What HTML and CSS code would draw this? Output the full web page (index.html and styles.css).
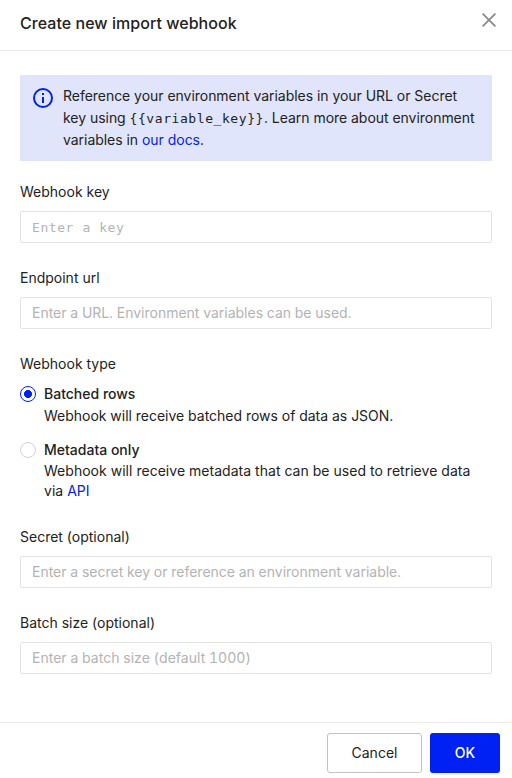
FILE: index.html
```html
<!DOCTYPE html>
<html lang="en">
<head>
<meta charset="utf-8">
<title>Create new import webhook</title>
<link rel="stylesheet" href="styles.css">
</head>
<body>
<div class="modal">
  <header class="header">
    <h1 class="title">Create new import webhook</h1>
    <button class="close" aria-label="Close"><svg width="16" height="16" viewBox="0 0 16 16"><path d="M1.6 1.6l12.8 12.8M14.4 1.6l-12.8 12.8" stroke="#8a8a8a" stroke-width="1.8" fill="none"/></svg></button>
  </header>
  <main class="body">
    <div class="alert">
      <svg class="info" width="20" height="20" viewBox="0 0 20 20" fill="none" stroke="#0021f3" stroke-width="2"><circle cx="10" cy="10" r="9"/><path d="M10 9v6M10 5v2"/></svg>
      <p class="alert-text"><span class="tight">Reference your environment variables in your URL or Secret</span><br><span class="tight">key using <code>{{variable_key}}</code>. Learn more about environment</span><br><span class="tight">variables in <a>our docs</a>.</span></p>
    </div>
    <div class="field"><label>Webhook key</label><input class="mono" placeholder="Enter a key"></div>
    <div class="field"><label>Endpoint url</label><input placeholder="Enter a URL. Environment variables can be used."></div>
    <div class="types">
      <div class="types-label">Webhook type</div>
      <div class="option"><span class="radio checked"></span><div><div class="name">Batched rows</div><div class="desc first">Webhook will receive batched rows of data as JSON.</div></div></div>
      <div class="option"><span class="radio"></span><div><div class="name">Metadata only</div><div class="desc">Webhook will receive metadata that can be used to retrieve data<br>via <a>API</a></div></div></div>
    </div>
    <div class="field"><label>Secret (optional)</label><input placeholder="Enter a secret key or reference an environment variable."></div>
    <div class="field"><label>Batch size (optional)</label><input class="batch" placeholder="Enter a batch size (default 1000)"></div>
  </main>
  <footer class="footer"><button class="btn cancel">Cancel</button><button class="btn ok">OK</button></footer>
</div>
</body>
</html>
```
FILE: styles.css
```css
* { box-sizing: border-box; }
body { margin: 0; background: #fff; color: #222; font: 14px/22px Inter, sans-serif; }
.modal { display: flex; flex-direction: column; height: 778px; overflow: hidden; }
.header { display: flex; justify-content: space-between; flex: none; height: 51px; padding: 12px 15px 0 20px; border-bottom: 1px solid #ececec; }
.title { margin: 0; font-size: 16px; line-height: 22px; font-weight: 500; letter-spacing: .04px; }
.close { display: flex; width: 16px; height: 16px; padding: 0; border: 0; background: none; }
.body { flex: 1; padding: 24px 20px 0; }
.alert { display: flex; gap: 10px; height: 86px; padding: 10px 13px; margin-bottom: 20px; background: #e1e5fc; }
.info { flex: none; margin-top: 3px; }
.alert-text { margin: 0; white-space: nowrap; }
.tight { letter-spacing: -.035px; }
code { font: 13px/20px "DejaVu Sans Mono", monospace; letter-spacing: .57px; }
a { color: #0021f3; }
.field { display: flex; flex-direction: column; gap: 8px; height: 86px; }
label { height: 22px; }
input { width: 100%; height: 32px; padding: 0 11px 2px; border: 1px solid #e3e3e3; border-radius: 2px; font: inherit; font-variant-numeric: tabular-nums; letter-spacing: -.005px; }
input::placeholder { color: #b3b3b3; }
input.mono { padding-bottom: 0; font-family: "DejaVu Sans Mono", monospace; font-size: 13px; letter-spacing: .57px; }
input.batch { letter-spacing: .02px; }
.types { height: 173px; }
.types-label { margin-bottom: 8px; }
.option { display: flex; gap: 8px; margin-bottom: 12px; }
.radio { flex: none; width: 16px; height: 16px; margin-top: 3px; border: 1px solid #d2d2d2; border-radius: 50%; }
.checked { border-color: #0021f3; background: radial-gradient(circle, #0021f3 0 3.7px, #fff 4.3px); }
.name { font-weight: 500; }
.desc { line-height: 20px; white-space: nowrap; letter-spacing: .025px; }
.first { line-height: 22px; letter-spacing: -.02px; }
.footer { display: flex; flex: none; justify-content: flex-end; gap: 8px; height: 56px; padding: 10px 12px 0; border-top: 1px solid #ececec; }
.btn { height: 40px; border-radius: 3px; font: inherit; }
.cancel { width: 95px; border: 1px solid #c4c4c4; background: #fff; color: #222; }
.ok { width: 70px; border: 0; background: #0021f3; color: #fff; font-weight: 500; box-shadow: 0 2px 0 rgba(0, 0, 0, .04); }
```
